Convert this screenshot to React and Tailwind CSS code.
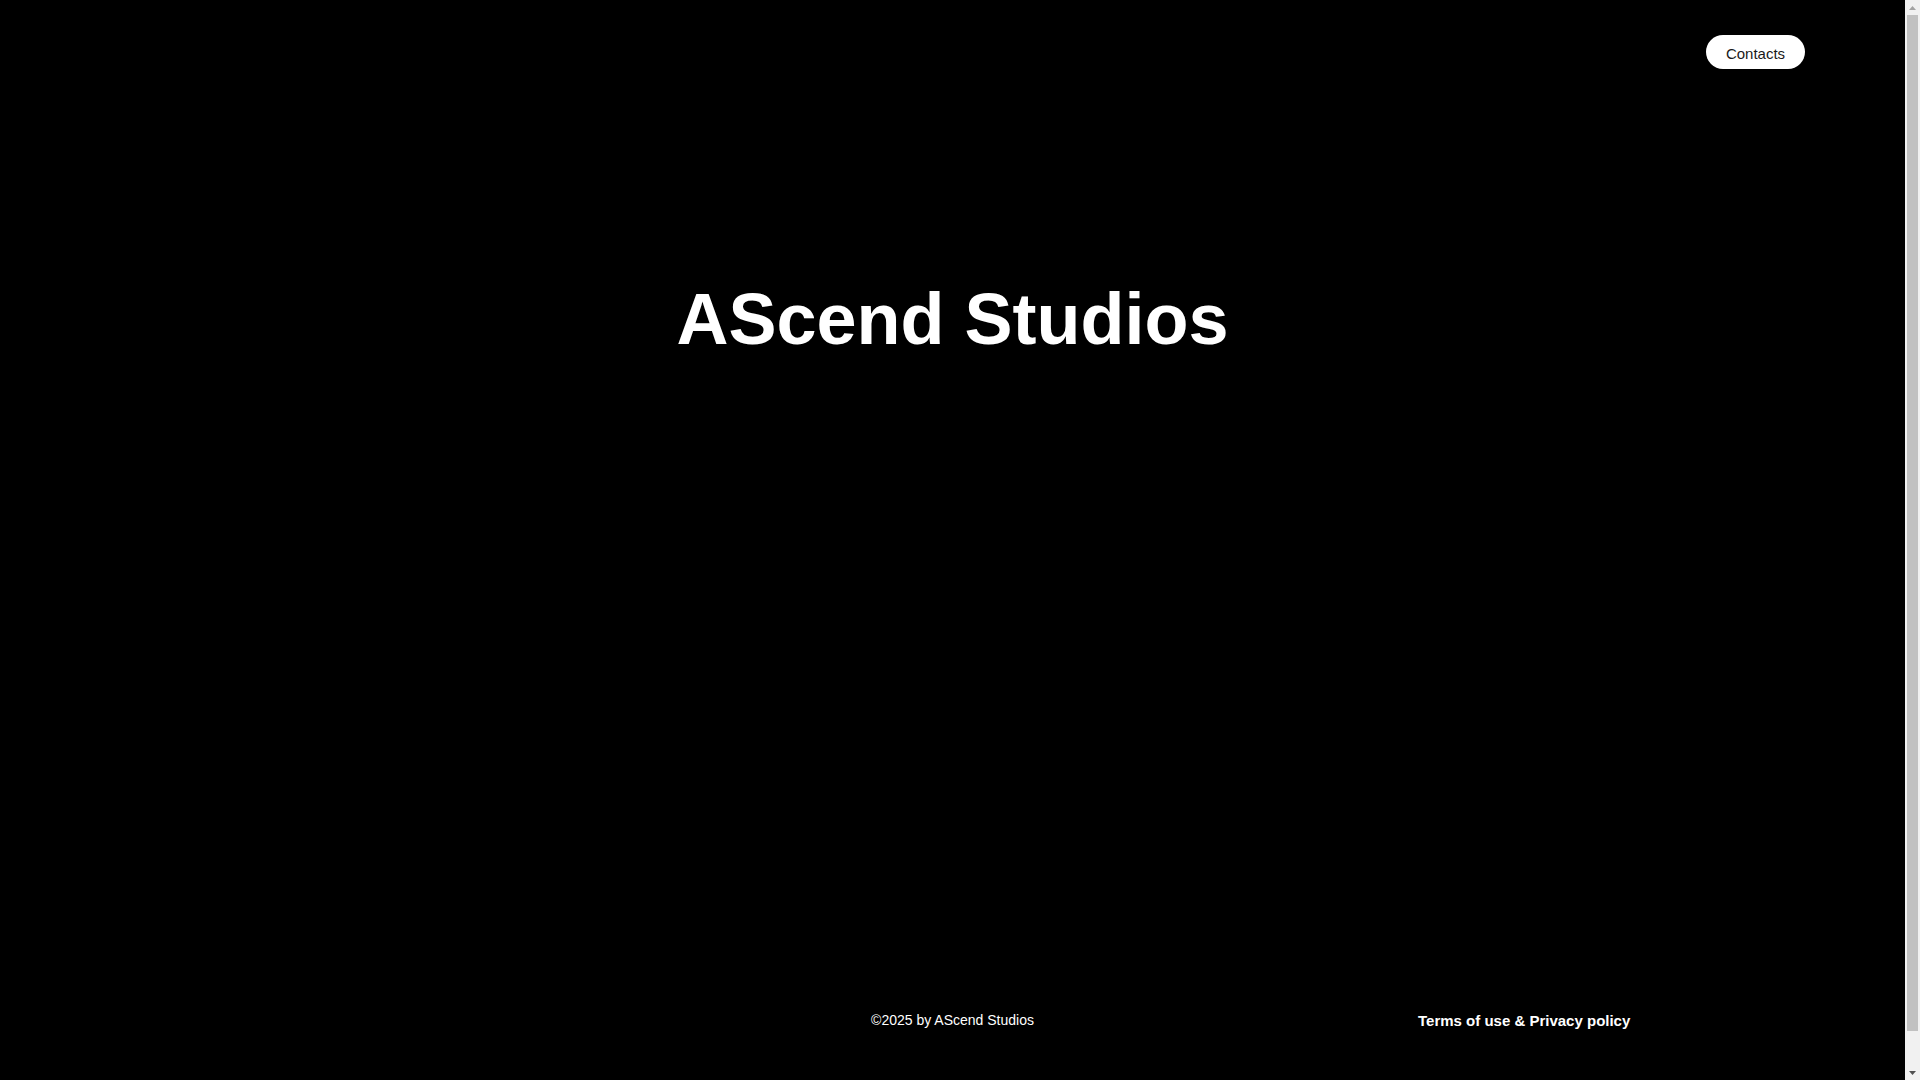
function Scrollbar() {
  return (
    <div className="fixed right-0 top-0 flex h-screen w-[15px] flex-col bg-[#f1f1f1]">
      <div className="flex h-[15px] items-center justify-center">
        <svg width="7" height="4" viewBox="0 0 7 4">
          <path d="M3.5 0L7 4H0z" fill="#a3a3a3" />
        </svg>
      </div>
      <div className="mx-[2px] h-[1016px] bg-[#c1c1c1]" />
      <div className="mt-auto flex h-[15px] items-center justify-center">
        <svg width="7" height="4" viewBox="0 0 7 4">
          <path d="M0 0H7L3.5 4z" fill="#505050" />
        </svg>
      </div>
    </div>
  )
}

export default function App() {
  return (
    <div className="flex min-h-[1116px] w-[1905px] flex-col bg-black font-['Liberation_Sans',Arial,sans-serif] text-white">
      <header className="flex justify-end pr-[100px] pt-[35px]">
        <a
          href="#contacts"
          className="flex h-[34px] w-[99px] items-center justify-center rounded-full bg-white pt-[2px] text-[15px] leading-none text-[#1a1a1a]"
        >
          Contacts
        </a>
      </header>

      <main className="pt-[214px]">
        <h1 className="text-center text-[72px] font-bold leading-[72px]">AScend Studios</h1>
      </main>

      <footer className="mt-auto grid grid-cols-3 items-start pb-[85px]">
        <div />
        <p className="mt-[1px] text-center text-[14px] leading-[20px]">©2025 by AScend Studios</p>
        <a href="#terms" className="mt-[2px] pl-[148px] text-[15px] font-bold leading-[20px]">
          Terms of use &amp; Privacy policy
        </a>
      </footer>

      <Scrollbar />
    </div>
  )
}
